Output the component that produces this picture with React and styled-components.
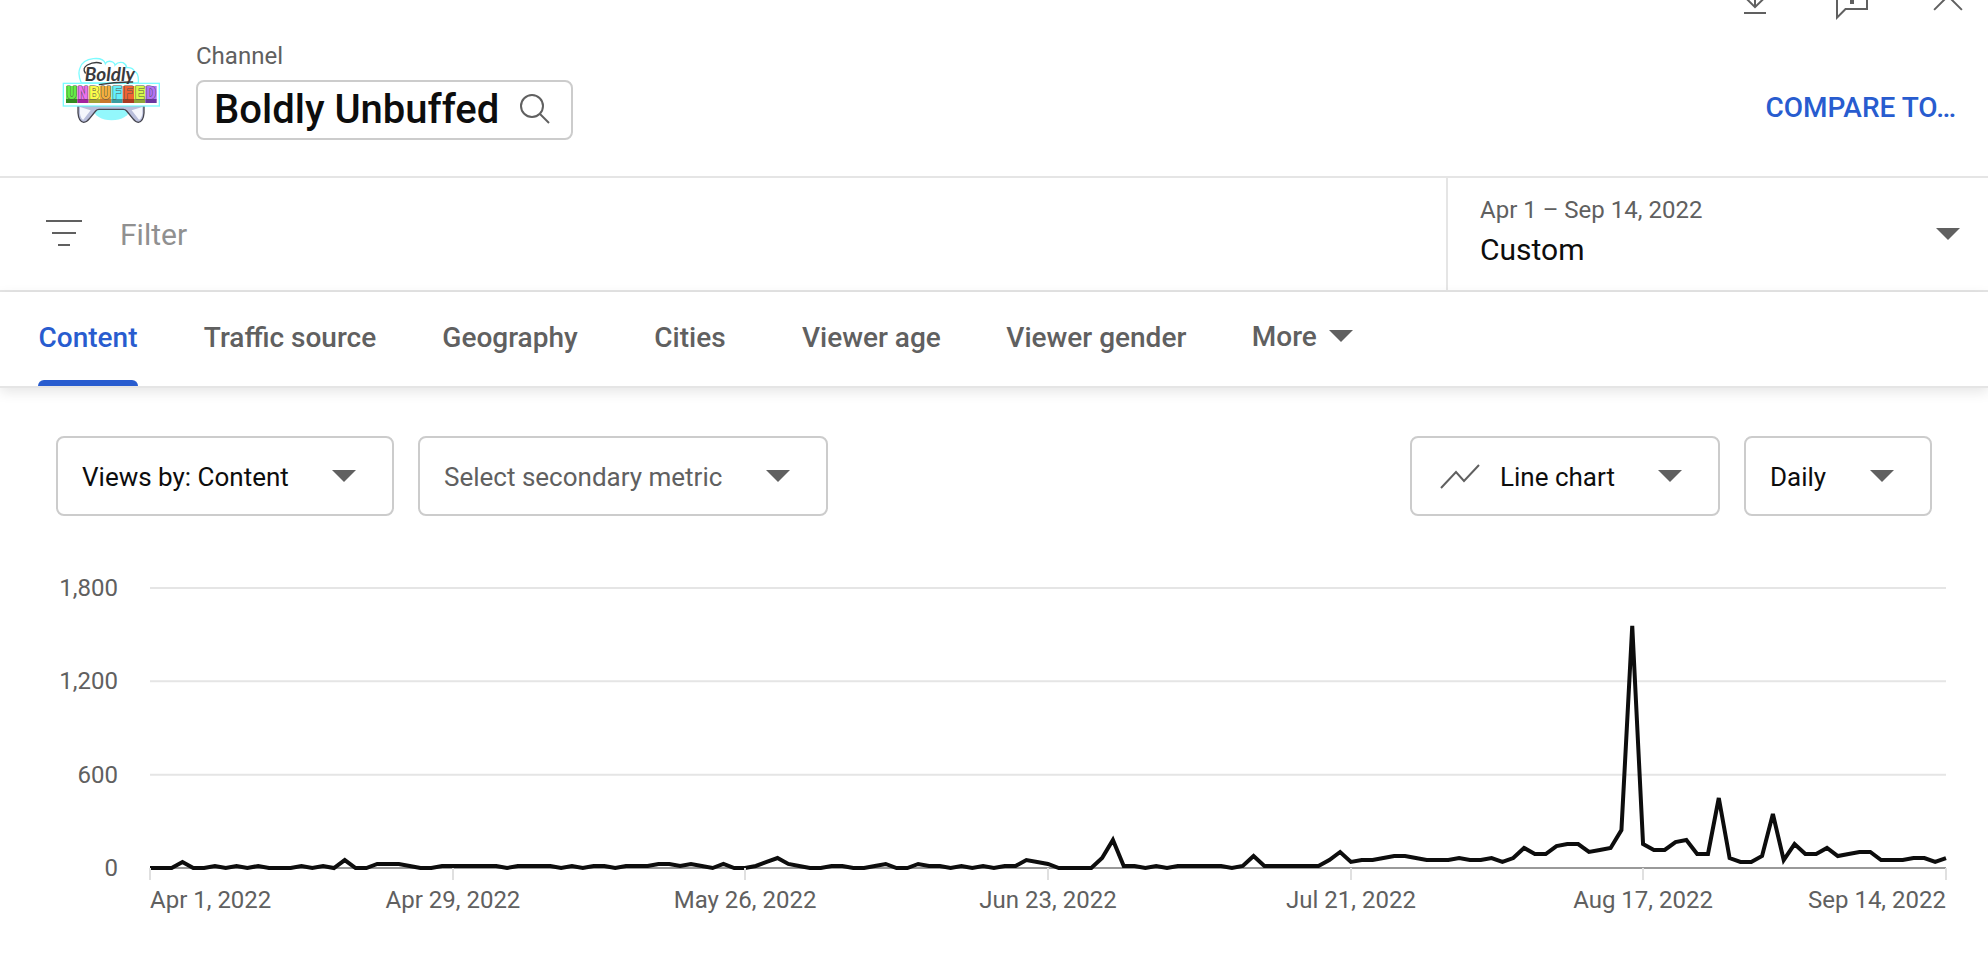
import { useState } from 'react';
import styled, { createGlobalStyle } from 'styled-components';

const GlobalStyle = createGlobalStyle`
  * {
    box-sizing: border-box;
  }

  body {
    margin: 0;
    background: #fff;
    color: #0d0d0d;
    font-family: Roboto, "Liberation Sans", sans-serif;
  }

  button, input, select {
    font-family: inherit;
    color: inherit;
    background: none;
    border: none;
    margin: 0;
    padding: 0;
  }

  button, select {
    cursor: pointer;
  }
`;

const Page = styled.div`
  display: flex;
  flex-direction: column;
`;

const ActionBar = styled.div`
  display: flex;
  justify-content: flex-end;
  align-items: flex-end;
  gap: 48px;
  height: 24px;
  padding-right: 16px;
  overflow: hidden;
`;

const IconButton = styled.button`
  width: 48px;
  height: 48px;
  flex-shrink: 0;
  color: #606060;

  svg {
    display: block;
    width: 48px;
    height: 48px;
    fill: currentColor;
  }
`;

const Header = styled.header`
  display: flex;
  padding: 18px 32px 36px 62px;
  border-bottom: 2px solid #e5e5e5;
`;

const Logo = styled.svg`
  width: 100px;
  height: 68px;
  margin-right: 34px;
  align-self: center;
`;

const ChannelInfo = styled.div`
  display: flex;
  flex-direction: column;
  align-items: flex-start;
  gap: 10px;
`;

const ChannelLabel = styled.span`
  font-size: 24px;
  line-height: 28px;
  color: #606060;
`;

const ChannelPicker = styled.button`
  display: flex;
  align-items: center;
  gap: 16px;
  height: 60px;
  padding: 0 16px 2px;
  border: 2px solid #ccc;
  border-radius: 8px;
  font-size: 40px;
  font-weight: 500;
  color: #0d0d0d;

  svg {
    width: 40px;
    height: 40px;
  }
`;

const CompareButton = styled.button`
  align-self: flex-end;
  margin-left: auto;
  font-size: 28px;
  line-height: 64px;
  font-weight: 500;
  color: #285ccf;
`;

const FilterRow = styled.div`
  display: flex;
  height: 114px;
  border-bottom: 2px solid #e5e5e5;
`;

const FilterField = styled.label`
  display: flex;
  align-items: center;
  flex: 1;
  gap: 32px;
  padding-left: 40px;

  svg {
    width: 48px;
    height: 48px;
    fill: #606060;
  }
`;

const FilterInput = styled.input`
  flex: 1;
  height: 48px;
  font-size: 30px;
  outline: none;

  &::placeholder {
    color: #909090;
    opacity: 1;
  }
`;

const DateRange = styled.button`
  display: flex;
  align-items: center;
  justify-content: space-between;
  width: 542px;
  padding: 0 28px 0 32px;
  border-left: 2px solid #e5e5e5;
  text-align: left;
`;

const DateText = styled.span`
  display: flex;
  flex-direction: column;
`;

const DateDetail = styled.span`
  font-size: 24px;
  line-height: 32px;
  color: #606060;
`;

const DateName = styled.span`
  font-size: 30px;
  line-height: 48px;
  color: #0d0d0d;
`;

const Arrow = styled.span`
  width: 0;
  height: 0;
  border: 12px solid transparent;
  border-top-color: #606060;
  border-bottom: none;
`;

const TabBar = styled.nav`
  display: flex;
  gap: 64px;
  height: 96px;
  padding-left: 38px;
  border-bottom: 2px solid #e5e5e5;
  box-shadow: 0 4px 12px rgba(0, 0, 0, 0.1);
`;

const Tab = styled.button`
  display: flex;
  flex-direction: column;
  align-items: center;
  justify-content: space-between;
  min-width: ${({ $width }) => $width}px;
  padding-top: 28px;
  font-size: 28px;
  line-height: 36px;
  font-weight: 500;
  white-space: nowrap;
  color: ${({ $active }) => ($active ? '#285ccf' : '#606060')};

  &::after {
    content: '';
    width: 100%;
    height: 6px;
    border-radius: 6px 6px 0 0;
    background: ${({ $active }) => ($active ? '#285ccf' : 'transparent')};
  }
`;

const MoreButton = styled.button`
  display: flex;
  align-items: center;
  gap: 12px;
  padding-bottom: 6px;
  font-size: 28px;
  font-weight: 500;
  color: #606060;
`;

const Controls = styled.div`
  display: flex;
  gap: 24px;
  padding: 48px 56px 0;
`;

const SelectBox = styled.label`
  display: flex;
  align-items: center;
  position: relative;
  height: 80px;
  border: 2px solid #ccc;
  border-radius: 8px;
  margin-left: ${({ $pushRight }) => ($pushRight ? 'auto' : '0')};

  > svg {
    width: 48px;
    height: 48px;
    margin-left: 24px;
    margin-right: -8px;
  }

  ${Arrow} {
    position: absolute;
    right: 36px;
    top: 32px;
    pointer-events: none;
  }
`;

const Select = styled.select`
  appearance: none;
  height: 76px;
  padding: 2px 103px 0 24px;
  font-size: 26px;
  color: ${({ $muted }) => ($muted ? '#606060' : '#0d0d0d')};
  outline: none;
`;

const ChartArea = styled.section`
  display: flex;
  gap: 32px;
  padding: 56px 42px 32px;
`;

const YAxis = styled.div`
  display: flex;
  flex-direction: column;
  justify-content: space-between;
  width: 76px;
  height: 312px;
  text-align: right;
  font-size: 24px;
  line-height: 32px;
  color: #606060;
`;

const Plot = styled.div`
  flex: 1;
  min-width: 0;
  padding-top: 16px;
`;

const PlotSvg = styled.svg`
  display: block;
  width: 100%;
  height: 280px;
  overflow: visible;

  line, polyline {
    fill: none;
    vector-effect: non-scaling-stroke;
  }
`;

const XAxis = styled.div`
  display: grid;
`;

const Tick = styled.div`
  display: flex;
  flex-direction: column;
  align-items: ${({ $align }) => $align};
  width: 0;
  font-size: 24px;
  line-height: 32px;
  white-space: nowrap;
  color: #606060;

  &::before {
    content: '';
    align-self: center;
    width: 2px;
    height: 12px;
    margin-bottom: 4px;
    background: #e0e0e0;
  }
`;

const TABS = [
  { name: 'Content', width: 100 },
  { name: 'Traffic source', width: 176 },
  { name: 'Geography', width: 136 },
  { name: 'Cities', width: 96 },
  { name: 'Viewer age', width: 138 },
  { name: 'Viewer gender', width: 183 },
];

const MAX_VIEWS = 1800;
const GRID = [1800, 1200, 600];

// daily views, one entry per day from Apr 1
const VIEWS = [
  0, 0, 0, 39, 0, 0, 13, 0, 13, 0, 13, 0, 0, 0, 13, 0, 13, 0, 51, 0,
  0, 26, 26, 26, 13, 0, 0, 13, 13, 13, 13, 13, 13, 0, 13, 13, 13, 13, 0, 13,
  0, 13, 13, 0, 13, 13, 13, 26, 26, 13, 26, 13, 0, 26, 0, 0, 13, 39, 64, 26,
  13, 0, 0, 13, 13, 0, 0, 13, 26, 0, 0, 26, 13, 13, 0, 13, 0, 13, 0, 13,
  13, 51, 39, 26, 0, 0, 0, 0, 64, 180, 13, 13, 0, 13, 0, 13, 13, 13, 13, 13,
  0, 13, 77, 13, 13, 13, 13, 13, 13, 51, 103, 39, 51, 51, 64, 77, 77, 64, 51, 51,
  51, 64, 51, 51, 64, 39, 64, 129, 90, 90, 141, 154, 154, 103, 116, 129, 244, 1556, 154, 116,
  116, 167, 180, 90, 90, 450, 64, 39, 39, 77, 347, 51, 154, 90, 90, 129, 77, 90, 103, 103,
  51, 51, 51, 64, 64, 39, 64,
];

const TICKS = [
  { day: 0, label: 'Apr 1, 2022' },
  { day: 28, label: 'Apr 29, 2022' },
  { day: 55, label: 'May 26, 2022' },
  { day: 83, label: 'Jun 23, 2022' },
  { day: 111, label: 'Jul 21, 2022' },
  { day: 138, label: 'Aug 17, 2022' },
  { day: 166, label: 'Sep 14, 2022' },
];

const LETTERS = [
  { char: 'U', color: '#63ee45', shade: '#318a22' },
  { char: 'N', color: '#ee70f0', shade: '#a3239f' },
  { char: 'B', color: '#fbfb4a', shade: '#a2a136' },
  { char: 'U', color: '#f4ae3c', shade: '#c9782c' },
  { char: 'F', color: '#66effa', shade: '#3b9da0' },
  { char: 'F', color: '#ee6234', shade: '#a93a20' },
  { char: 'E', color: '#d6f84a', shade: '#8ea53a' },
  { char: 'D', color: '#b272f5', shade: '#6a36a0' },
];

function ChannelLogo() {
  return (
    <Logo viewBox="36 34 300 204" role="img" aria-label="Boldly Unbuffed logo">
      <ellipse cx="185" cy="190" rx="55" ry="34" fill="#93f8fc" />
      <path
        d="M84 180v22q2 26 17 28q10-1 18-12l18-22q4-5 10-5h73q6 0 10 5l18 22q8 11 17 12q15-2 17-28v-22z"
        fill="#b9bedb"
        stroke="#45454f"
        strokeWidth="4"
      />
      <path d="M90 184v20q3 17 10 18l22-28zM277 184v20q-3 17-10 18l-22-28z" fill="#f5f6fc" />
      <path
        d="M94 112Q82 85 90 67Q98 42 130 39Q161 36 166 54Q172 43 188 49Q195 54 195 58Q205 47 219 51Q230 57 230 66Q248 64 254 78Q267 82 265 112z"
        fill="#fff"
        stroke="#7dfbff"
        strokeWidth="4"
      />
      <rect x="40" y="113" width="288" height="68" fill="#fff" stroke="#7dfbff" strokeWidth="4" />
      <text
        x="104"
        y="105"
        fill="#3a3a3d"
        fontFamily="Lato, sans-serif"
        fontSize="57"
        fontStyle="italic"
        fontWeight="700"
      >
        Boldly
      </text>
      <path
        d="M106 82Q96 68 112 58Q134 46 154 53M148 117Q196 108 248 109"
        fill="none"
        stroke="#3a3a3d"
        strokeWidth="4"
        strokeLinecap="round"
      />
      {LETTERS.map(({ char, color, shade }, i) => (
        <g key={i}>
          <rect x={48 + i * 34} y="121" width="34" height="40" fill={color} />
          <rect x={48 + i * 34} y="160" width="34" height="12" fill={shade} />
          <text
            x={65 + i * 34}
            y="160"
            textAnchor="middle"
            fill={color}
            stroke="#55554c"
            strokeWidth="3"
            paintOrder="stroke"
            fontFamily="DejaVu Sans Mono, monospace"
            fontSize="52"
            fontWeight="700"
          >
            {char}
          </text>
        </g>
      ))}
    </Logo>
  );
}

function Dropdown({ label, value, muted, pushRight, icon }) {
  return (
    <SelectBox $pushRight={pushRight}>
      {icon}
      <Select aria-label={label} $muted={muted} defaultValue={value}>
        <option value={value}>{value}</option>
      </Select>
      <Arrow />
    </SelectBox>
  );
}

function ViewsChart() {
  const lastDay = VIEWS.length - 1;
  const points = VIEWS.map((views, day) => `${day},${MAX_VIEWS - views}`).join(' ');
  const columns = TICKS.slice(1).map((tick, i) => `minmax(0, ${tick.day - TICKS[i].day}fr)`);

  const alignTick = (i) => {
    if (i === 0) return 'flex-start';
    return i === TICKS.length - 1 ? 'flex-end' : 'center';
  };

  return (
    <ChartArea>
      <YAxis>
        {[...GRID, 0].map(value => (
          <span key={value}>{value.toLocaleString('en-US')}</span>
        ))}
      </YAxis>
      <Plot>
        <PlotSvg viewBox={`0 0 ${lastDay} ${MAX_VIEWS}`} preserveAspectRatio="none">
          {GRID.map(value => (
            <line
              key={value}
              x1="0"
              x2={lastDay}
              y1={MAX_VIEWS - value}
              y2={MAX_VIEWS - value}
              stroke="#e5e5e5"
              strokeWidth="2"
            />
          ))}
          <line x1="0" x2={lastDay} y1={MAX_VIEWS} y2={MAX_VIEWS} stroke="#999" strokeWidth="2" />
          <polyline points={points} stroke="#0d0d0d" strokeWidth="4" />
        </PlotSvg>
        <XAxis style={{ gridTemplateColumns: `${columns.join(' ')} 0` }}>
          {TICKS.map((tick, i) => (
            <Tick key={tick.day} $align={alignTick(i)}>{tick.label}</Tick>
          ))}
        </XAxis>
      </Plot>
    </ChartArea>
  );
}

export default function App() {
  const [activeTab, setActiveTab] = useState('Content');
  const [filter, setFilter] = useState('');

  return (
    <Page>
      <GlobalStyle />
      <ActionBar>
        <IconButton aria-label="Download">
          <svg viewBox="0 0 24 24">
            <path d="M17 18v1H6v-1h11zm-.5-6.6l-.7-.7-3.8 3.7V4h-1v10.4l-3.8-3.8-.7.7 5 5 5-4.9z" />
          </svg>
        </IconButton>
        <IconButton aria-label="Send feedback">
          <svg viewBox="0 0 24 24">
            <path d="M13 14h-2v-2h2v2zm0-9h-2v6h2V5zm6-2H5v16.6l3.3-3.3.3-.3H19V3m1-1v15H9l-5 5V2h16z" />
          </svg>
        </IconButton>
        <IconButton aria-label="Close">
          <svg viewBox="0 0 24 24">
            <path d="M12.7 10l6.6 6.6-.7.7-6.6-6.6-6.6 6.6-.7-.7 6.6-6.6-6.6-6.6.7-.7 6.6 6.6 6.6-6.6.7.7z" />
          </svg>
        </IconButton>
      </ActionBar>

      <Header>
        <ChannelLogo />
        <ChannelInfo>
          <ChannelLabel>Channel</ChannelLabel>
          <ChannelPicker>
            Boldly Unbuffed
            <svg viewBox="0 0 40 40" fill="none" stroke="#606060" strokeWidth="2">
              <circle cx="17" cy="17" r="11" />
              <path d="M25 25l9 9" />
            </svg>
          </ChannelPicker>
        </ChannelInfo>
        <CompareButton>COMPARE TO…</CompareButton>
      </Header>

      <FilterRow>
        <FilterField>
          <svg viewBox="0 0 48 48">
            <path d="M6 10h36v2H6zM12 22h24v2H12zM18 34h12v2H18z" />
          </svg>
          <FilterInput
            type="text"
            aria-label="Filter"
            placeholder="Filter"
            value={filter}
            onChange={e => setFilter(e.target.value)}
          />
        </FilterField>
        <DateRange>
          <DateText>
            <DateDetail>Apr 1 – Sep 14, 2022</DateDetail>
            <DateName>Custom</DateName>
          </DateText>
          <Arrow />
        </DateRange>
      </FilterRow>

      <TabBar>
        {TABS.map(tab => (
          <Tab
            key={tab.name}
            $width={tab.width}
            $active={tab.name === activeTab}
            onClick={() => setActiveTab(tab.name)}
          >
            {tab.name}
          </Tab>
        ))}
        <MoreButton>
          More
          <Arrow />
        </MoreButton>
      </TabBar>

      <Controls>
        <Dropdown label="Primary metric" value="Views by: Content" />
        <Dropdown label="Secondary metric" value="Select secondary metric" muted />
        <Dropdown
          label="Chart type"
          value="Line chart"
          pushRight
          icon={
            <svg viewBox="0 0 48 48" fill="none" stroke="#606060" strokeWidth="2">
              <path d="M5 36l15-16 8 9 15-16" />
            </svg>
          }
        />
        <Dropdown label="Granularity" value="Daily" />
      </Controls>

      <ViewsChart />
    </Page>
  );
}
